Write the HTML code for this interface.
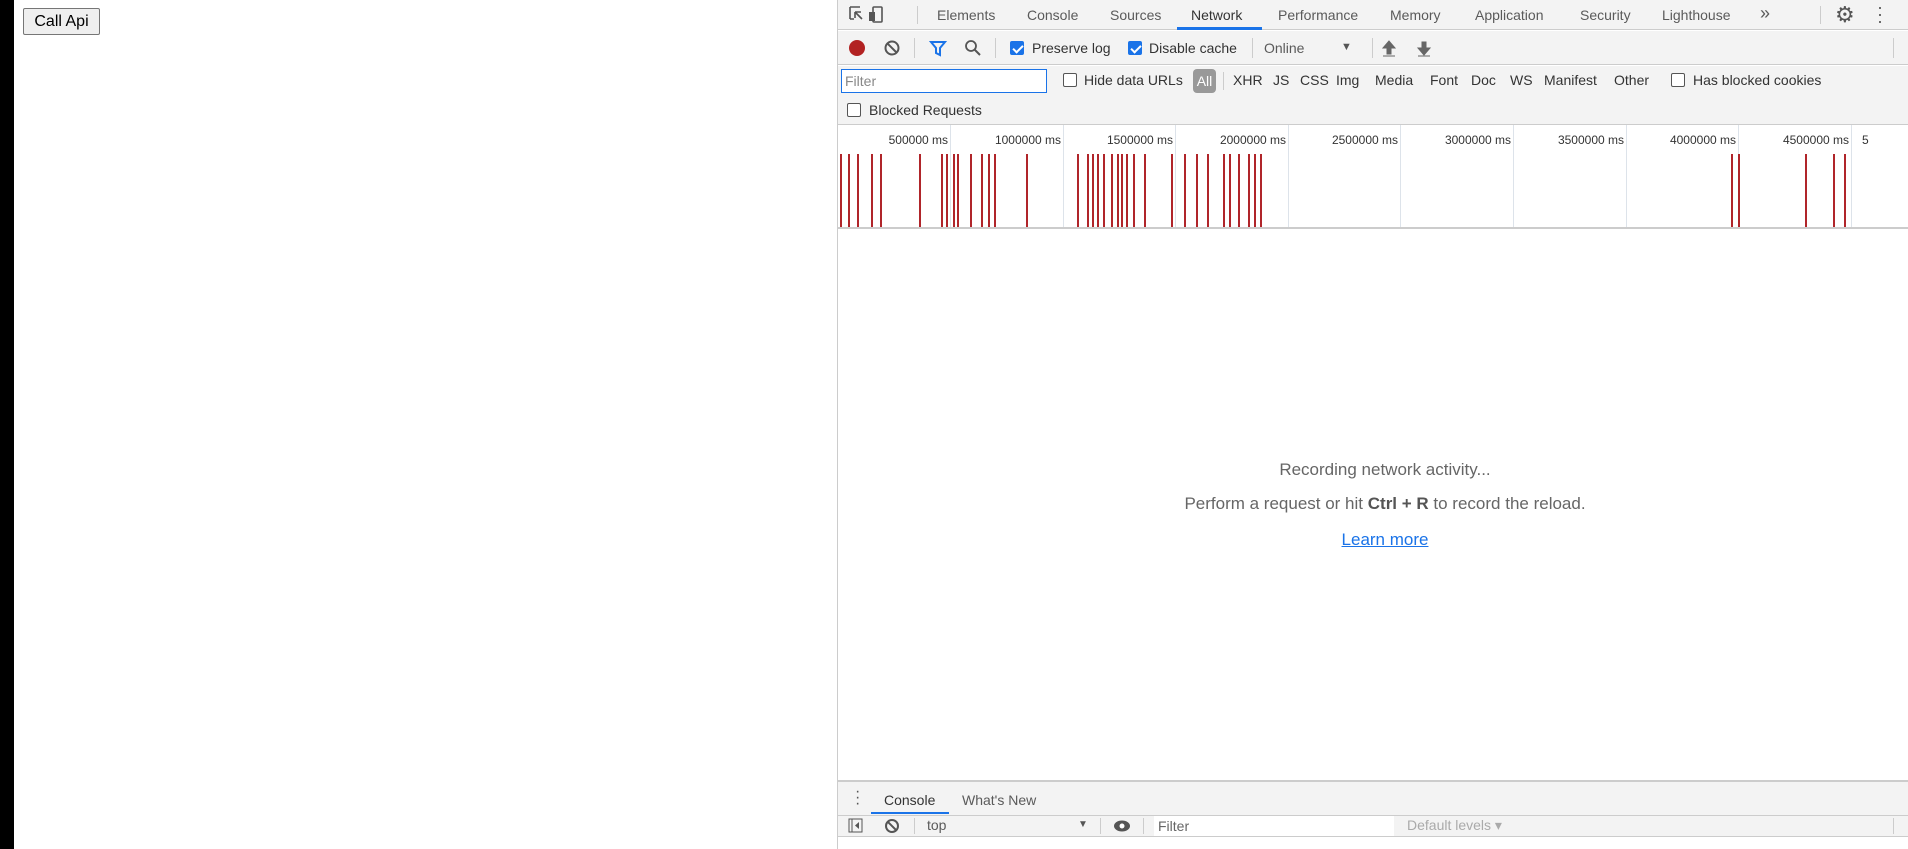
<!DOCTYPE html>
<html><head><meta charset="utf-8"><style>
*{margin:0;padding:0;box-sizing:border-box}
body{width:1908px;height:849px;position:relative;overflow:hidden;background:#fff;font-family:"Liberation Sans",sans-serif;color:#333}
.a{position:absolute;white-space:nowrap}
.t{font-size:14px;color:#5a5a5a}
.cb{position:absolute;width:14px;height:14px;border:1px solid #555;border-radius:2px;background:#fff}
.cbon{background:#1a73e8;border-color:#1a73e8}
.cbon:after{content:"";position:absolute;left:4px;top:1px;width:4px;height:8px;border:solid #fff;border-width:0 2px 2px 0;transform:rotate(45deg)}
.sep{position:absolute;width:1px;background:#ccc}
.gl{position:absolute;top:125px;height:103px;width:1px;background:#dde3ea}
.lb{position:absolute;top:133px;font-size:12px;color:#333;text-align:right;width:100px}
.r{position:absolute;top:154px;height:73px;width:2px;background:#b0252a}
</style></head><body>
<div class="a" style="left:0;top:0;width:14px;height:849px;background:#000"></div>
<div class="a" style="left:23px;top:8px;width:77px;height:27px;border:1px solid #767676;border-radius:2px;background:#efefef;font-size:16px;line-height:25px;text-align:center;color:#000">Call Api</div>

<div class="a" style="left:837px;top:0;width:1071px;height:849px;background:#fff;border-left:1px solid #ccc"></div>
<div class="a" style="left:838px;top:0;width:1070px;height:30px;background:#f3f3f3;border-bottom:1px solid #ccc"></div>
<svg class="a" style="left:848px;top:5px" width="40" height="20"><path d="M2 2h10M2 2v12M2 14h4M7 7l7 7M7 7h6M7 7v6" stroke="#555" stroke-width="1.6" fill="none"/><rect x="25" y="2" width="9" height="15" rx="1" stroke="#555" stroke-width="1.6" fill="none"/><rect x="21" y="7" width="6" height="9" fill="#555"/></svg>
<div class="sep" style="left:917px;top:6px;height:18px"></div>
<div class="a t" style="left:937px;top:7px">Elements</div>
<div class="a t" style="left:1027px;top:7px">Console</div>
<div class="a t" style="left:1110px;top:7px">Sources</div>
<div class="a t" style="left:1191px;top:7px;color:#333">Network</div>
<div class="a" style="left:1177px;top:27px;width:85px;height:3px;background:#1a73e8"></div>
<div class="a t" style="left:1278px;top:7px">Performance</div>
<div class="a t" style="left:1390px;top:7px">Memory</div>
<div class="a t" style="left:1475px;top:7px">Application</div>
<div class="a t" style="left:1580px;top:7px">Security</div>
<div class="a t" style="left:1662px;top:7px">Lighthouse</div>
<div class="a t" style="left:1760px;top:3px;font-size:18px">»</div>
<div class="sep" style="left:1820px;top:6px;height:18px"></div>
<div class="a" style="left:1835px;top:2px;font-size:22px;color:#555">⚙</div>
<div class="a" style="left:1877px;top:4px;font-size:18px;color:#555;line-height:7px">·<br>·<br>·</div>

<div class="a" style="left:838px;top:31px;width:1070px;height:34px;background:#f3f3f3;border-bottom:1px solid #ccc"></div>
<div class="a" style="left:849px;top:40px;width:16px;height:16px;border-radius:50%;background:#b22222"></div>
<svg class="a" style="left:884px;top:40px" width="16" height="16"><circle cx="8" cy="8" r="6.5" stroke="#555" stroke-width="2" fill="none"/><path d="M4 4l8 8" stroke="#555" stroke-width="2"/></svg>
<div class="sep" style="left:914px;top:38px;height:20px"></div>
<svg class="a" style="left:929px;top:39px" width="18" height="18"><path d="M2 3h14l-5 6v7l-4-2v-5z" fill="none" stroke="#1a73e8" stroke-width="2"/></svg>
<svg class="a" style="left:964px;top:39px" width="18" height="18"><circle cx="7" cy="7" r="5" stroke="#555" stroke-width="1.8" fill="none"/><path d="M11 11l5 5" stroke="#555" stroke-width="2"/></svg>
<div class="sep" style="left:995px;top:38px;height:20px"></div>
<div class="cb cbon" style="left:1010px;top:41px"></div>
<div class="a t" style="left:1032px;top:40px;color:#333">Preserve log</div>
<div class="cb cbon" style="left:1128px;top:41px"></div>
<div class="a t" style="left:1149px;top:40px;color:#333">Disable cache</div>
<div class="sep" style="left:1252px;top:38px;height:20px"></div>
<div class="a t" style="left:1264px;top:40px">Online</div>
<div class="a" style="left:1341px;top:41px;font-size:11px;color:#555">▼</div>
<div class="sep" style="left:1372px;top:38px;height:20px"></div>
<svg class="a" style="left:1381px;top:39px" width="60" height="18"><path d="M8 2l-6 7h4v6h4v-6h4z M2 17h12" fill="#666" stroke="#666" stroke-width="1"/><path d="M43 16l-6-7h4v-6h4v6h4z M37 17h12" fill="#666" stroke="#666" stroke-width="1"/></svg>
<div class="sep" style="left:1893px;top:38px;height:20px"></div>

<div class="a" style="left:838px;top:66px;width:1070px;height:59px;background:#f3f3f3;border-bottom:1px solid #ccc"></div>
<div class="a" style="left:841px;top:69px;width:206px;height:24px;border:1px solid #1a73e8;background:#fff;font-size:14px;color:#888;padding:3px 3px;line-height:16px">Filter</div>
<div class="cb" style="left:1063px;top:73px"></div>
<div class="a t" style="left:1084px;top:72px;color:#333">Hide data URLs</div>
<div class="a" style="left:1193px;top:69px;width:23px;height:24px;border-radius:4px;background:#999;color:#fff;font-size:14px;text-align:center;line-height:24px">All</div>
<div class="sep" style="left:1223px;top:72px;height:18px"></div>
<div class="a t" style="left:1233px;top:72px;color:#333">XHR</div>
<div class="a t" style="left:1273px;top:72px;color:#333">JS</div>
<div class="a t" style="left:1300px;top:72px;color:#333">CSS</div>
<div class="a t" style="left:1336px;top:72px;color:#333">Img</div>
<div class="a t" style="left:1375px;top:72px;color:#333">Media</div>
<div class="a t" style="left:1430px;top:72px;color:#333">Font</div>
<div class="a t" style="left:1471px;top:72px;color:#333">Doc</div>
<div class="a t" style="left:1510px;top:72px;color:#333">WS</div>
<div class="a t" style="left:1544px;top:72px;color:#333">Manifest</div>
<div class="a t" style="left:1614px;top:72px;color:#333">Other</div>
<div class="cb" style="left:1671px;top:73px"></div>
<div class="a t" style="left:1693px;top:72px;color:#333">Has blocked cookies</div>
<div class="cb" style="left:847px;top:103px"></div>
<div class="a t" style="left:869px;top:102px;color:#333">Blocked Requests</div>

<div class="gl" style="left:950px"></div><div class="gl" style="left:1063px"></div><div class="gl" style="left:1175px"></div><div class="gl" style="left:1288px"></div><div class="gl" style="left:1400px"></div><div class="gl" style="left:1513px"></div><div class="gl" style="left:1626px"></div><div class="gl" style="left:1738px"></div><div class="gl" style="left:1851px"></div>
<div class="lb" style="left:848px">500000 ms</div><div class="lb" style="left:961px">1000000 ms</div><div class="lb" style="left:1073px">1500000 ms</div><div class="lb" style="left:1186px">2000000 ms</div><div class="lb" style="left:1298px">2500000 ms</div><div class="lb" style="left:1411px">3000000 ms</div><div class="lb" style="left:1524px">3500000 ms</div><div class="lb" style="left:1636px">4000000 ms</div><div class="lb" style="left:1749px">4500000 ms</div><div class="lb" style="left:1862px;text-align:left">5</div>
<div class="r" style="left:840px"></div><div class="r" style="left:848px"></div><div class="r" style="left:857px"></div><div class="r" style="left:871px"></div><div class="r" style="left:880px"></div><div class="r" style="left:919px"></div><div class="r" style="left:941px"></div><div class="r" style="left:946px"></div><div class="r" style="left:953px"></div><div class="r" style="left:957px"></div><div class="r" style="left:970px"></div><div class="r" style="left:981px"></div><div class="r" style="left:988px"></div><div class="r" style="left:994px"></div><div class="r" style="left:1026px"></div><div class="r" style="left:1077px"></div><div class="r" style="left:1087px"></div><div class="r" style="left:1092px"></div><div class="r" style="left:1097px"></div><div class="r" style="left:1103px"></div><div class="r" style="left:1111px"></div><div class="r" style="left:1117px"></div><div class="r" style="left:1121px"></div><div class="r" style="left:1126px"></div><div class="r" style="left:1133px"></div><div class="r" style="left:1144px"></div><div class="r" style="left:1171px"></div><div class="r" style="left:1184px"></div><div class="r" style="left:1196px"></div><div class="r" style="left:1207px"></div><div class="r" style="left:1223px"></div><div class="r" style="left:1229px"></div><div class="r" style="left:1238px"></div><div class="r" style="left:1248px"></div><div class="r" style="left:1254px"></div><div class="r" style="left:1260px"></div><div class="r" style="left:1731px"></div><div class="r" style="left:1738px"></div><div class="r" style="left:1805px"></div><div class="r" style="left:1833px"></div><div class="r" style="left:1844px"></div>
<div class="a" style="left:838px;top:227px;width:1070px;height:2px;background:#ccc"></div>

<div class="a" style="left:838px;top:460px;width:1094px;text-align:center;font-size:17px;color:#666">Recording network activity...</div>
<div class="a" style="left:838px;top:494px;width:1094px;text-align:center;font-size:17px;color:#666">Perform a request or hit <b style="color:#555">Ctrl + R</b> to record the reload.</div>
<div class="a" style="left:838px;top:530px;width:1094px;text-align:center;font-size:17px;color:#1a73e8;text-decoration:underline">Learn more</div>

<div class="a" style="left:838px;top:780px;width:1070px;height:57px;background:#f3f3f3;border-top:2px solid #ccc;border-bottom:1px solid #ccc"></div>
<div class="a" style="left:855px;top:789px;font-size:16px;color:#555;line-height:6px">·<br>·<br>·</div>
<div class="a t" style="left:884px;top:792px;color:#333">Console</div>
<div class="a" style="left:871px;top:812px;width:78px;height:2px;background:#1a73e8"></div>
<div class="a t" style="left:962px;top:792px">What's New</div>
<div class="a" style="left:838px;top:815px;width:1070px;height:1px;background:#ccc"></div>
<svg class="a" style="left:848px;top:818px" width="60" height="16"><rect x="1" y="1" width="13" height="13" stroke="#555" fill="none"/><path d="M4 1v13" stroke="#555"/><path d="M11 4l-4 3.5 4 3.5z" fill="#555"/><circle cx="44" cy="8" r="6" stroke="#555" stroke-width="2" fill="none"/><path d="M40 4l8 8" stroke="#555" stroke-width="2"/></svg>
<div class="sep" style="left:914px;top:818px;height:16px"></div>
<div class="a t" style="left:927px;top:817px;font-size:14px">top</div>
<div class="a" style="left:1078px;top:819px;font-size:10px;color:#555">▼</div>
<div class="sep" style="left:1100px;top:818px;height:16px"></div>
<svg class="a" style="left:1113px;top:819px" width="18" height="14"><ellipse cx="9" cy="7" rx="8" ry="5.5" fill="#555"/><circle cx="9" cy="7" r="2.5" fill="#fff"/></svg>
<div class="sep" style="left:1143px;top:818px;height:16px"></div>
<div class="a" style="left:1154px;top:816px;width:240px;height:20px;background:#fff;font-size:14px;color:#666;padding:2px 4px">Filter</div>
<div class="a" style="left:1407px;top:817px;font-size:14px;color:#aaa">Default levels ▾</div>
<div class="sep" style="left:1893px;top:818px;height:16px"></div>
</body></html>
